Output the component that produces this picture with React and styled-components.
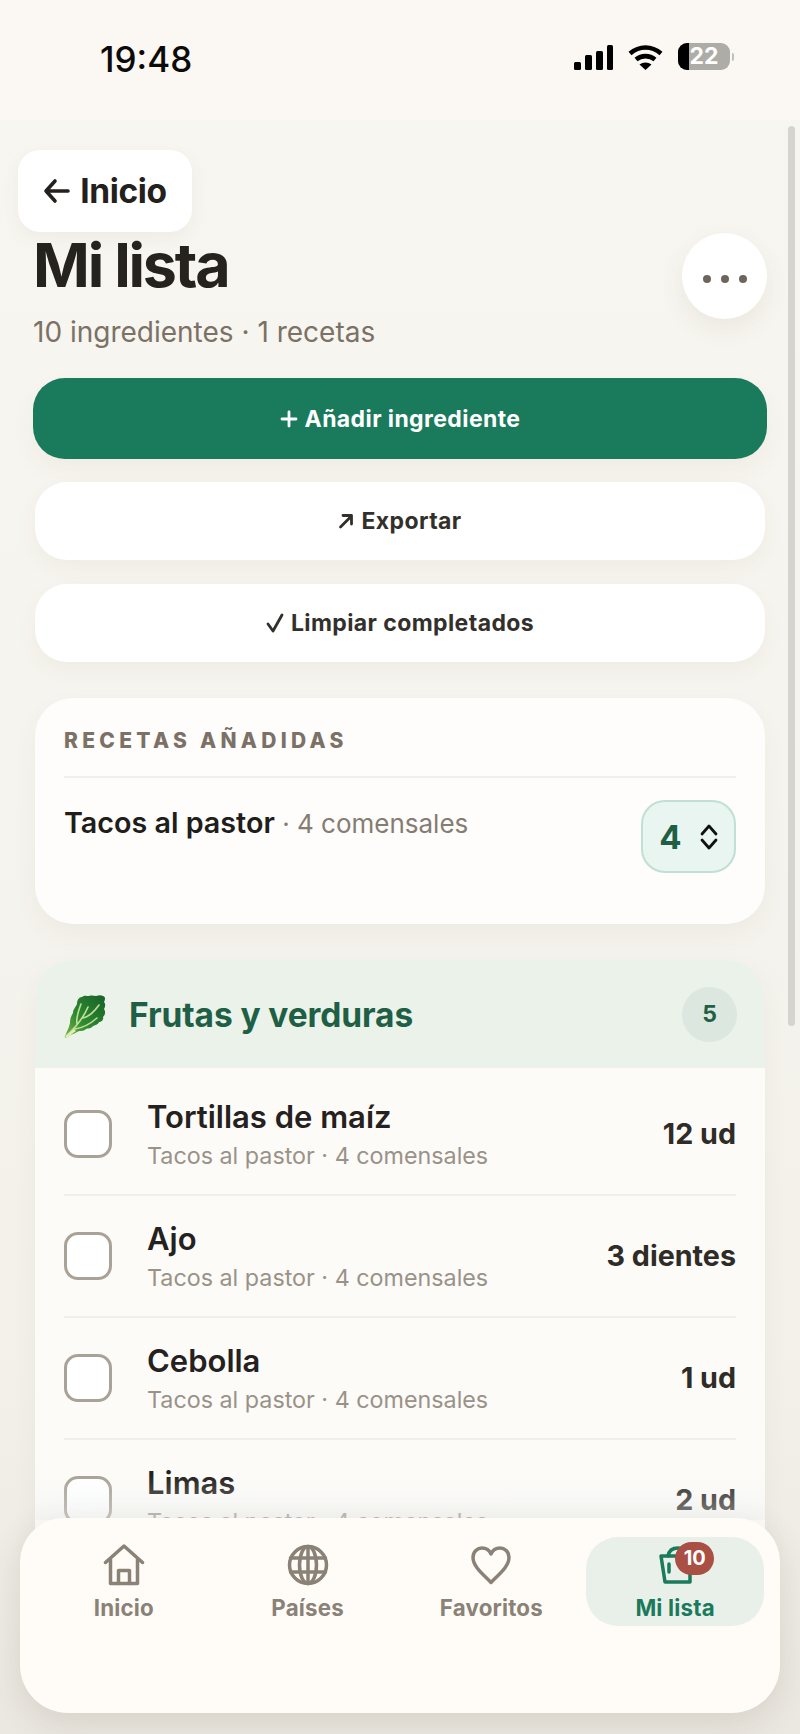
import React from "react";
import styled, { createGlobalStyle } from "styled-components";

const Global = createGlobalStyle`
  html, body { margin: 0; padding: 0; background: #f5f3ed; }
  * { box-sizing: border-box; }
  body { font-family: "Inter", "Liberation Sans", sans-serif; }
`;

const Page = styled.div`
  position: relative;
  width: 800px;
  height: 1734px;
  overflow: hidden;
  display: flex;
  flex-direction: column;
  background: linear-gradient(180deg, #f8f6f0 0%, #f6f4ee 45%, #f2f0e9 80%, #ebe8e1 100%);
`;

const StatusBar = styled.div`
  flex: 0 0 120px;
  background: #fbf8f3;
  display: flex;
  align-items: flex-start;
  justify-content: space-between;
  padding: 39px 70px 0 100px;
`;

const Time = styled.div`
  font-size: 35px;
  line-height: 40px;
  font-weight: 500;
  color: #0b0b0b;
`;

const StatusIcons = styled.div`
  display: flex;
  align-items: flex-start;
  gap: 15px;
  padding-top: 6px;
`;

const Battery = styled.div`
  position: relative;
  width: 52px;
  height: 27px;
  border-radius: 9px;
  overflow: hidden;
  background: #aeaca7;
  color: #fff;
  font-size: 23px;
  font-weight: 700;
  line-height: 27px;
  text-align: center;
  &::before {
    content: "";
    position: absolute;
    left: 0;
    top: 0;
    bottom: 0;
    width: 11px;
    background: #000;
  }
`;

const BatteryLabel = styled.span`
  position: relative;
`;

const BatteryWrap = styled.div`
  position: relative;
  margin-top: -2px;
  &::after {
    content: "";
    position: absolute;
    left: 54px;
    top: 10px;
    width: 2px;
    height: 8px;
    border-radius: 0 3px 3px 0;
    background: #c2c0bb;
  }
`;

const Scroller = styled.main`
  flex: 1;
  min-height: 0;
  padding: 112px 33px 0;
  overflow: hidden;
`;

const Scrollbar = styled.div`
  position: absolute;
  top: 126px;
  right: 5px;
  width: 7px;
  height: 900px;
  border-radius: 4px;
  background: #d6d4ce;
`;

const BackButton = styled.button`
  position: absolute;
  left: 18px;
  top: 150px;
  width: 174px;
  height: 82px;
  border: 0;
  border-radius: 22px;
  background: #fff;
  box-shadow: 0 6px 18px rgba(90, 80, 60, 0.06);
  display: flex;
  align-items: center;
  justify-content: center;
  gap: 9px;
  font-family: inherit;
  font-size: 33.5px;
  font-weight: 700;
  letter-spacing: -0.4px;
  color: #23201d;
`;

const Header = styled.header`
  display: flex;
  justify-content: space-between;
  align-items: flex-start;
`;

const Title = styled.h1`
  margin: 0;
  font-size: 61px;
  line-height: 66px;
  font-weight: 700;
  letter-spacing: -2.2px;
  color: #26231f;
`;

const Subtitle = styled.p`
  margin: 17px 0 0;
  font-size: 28px;
  line-height: 34px;
  color: #7b7166;
`;

const MoreButton = styled.button`
  width: 85px;
  height: 86px;
  margin-top: 1px;
  padding: 6px 0 0;
  border: 0;
  border-radius: 50%;
  background: #fff;
  box-shadow: 0 10px 24px rgba(90, 80, 60, 0.08);
  display: flex;
  align-items: center;
  justify-content: center;
  gap: 10px;
`;

const Dot = styled.span`
  width: 8px;
  height: 8px;
  border-radius: 50%;
  background: #6d645a;
`;

const Actions = styled.div`
  display: flex;
  flex-direction: column;
  align-items: stretch;
  margin-top: 29px;
`;

const PrimaryButton = styled.button`
  height: 81px;
  border: 0;
  border-radius: 32px;
  background: #1a7a5c;
  color: #fff;
  display: flex;
  align-items: center;
  justify-content: center;
  gap: 7px;
  font-family: inherit;
  font-size: 23px;
  font-weight: 700;
  letter-spacing: 0.4px;
  box-shadow: 0 10px 24px rgba(90, 80, 60, 0.05);
`;

const SecondaryButton = styled.button`
  height: 78px;
  margin: 23px 2px 0;
  border: 0;
  border-radius: 32px;
  background: #fff;
  color: #33302c;
  display: flex;
  align-items: center;
  justify-content: center;
  gap: 7px;
  font-family: inherit;
  font-size: 23px;
  font-weight: 700;
  letter-spacing: 0.4px;
  box-shadow: 0 8px 22px rgba(90, 80, 60, 0.05);
  & + & { margin-top: 24px; }
`;

const ButtonIcon = styled.svg`
  flex: none;
  fill: none;
  stroke: currentColor;
  stroke-width: 2.8;
  stroke-linecap: round;
  stroke-linejoin: round;
`;

const RecipesCard = styled.section`
  height: 226px;
  margin: 36px 2px 0;
  padding: 28px 29px 0;
  border-radius: 38px;
  background: #fefdfb;
  box-shadow: 0 10px 26px rgba(90, 80, 60, 0.05);
`;

const Eyebrow = styled.h2`
  margin: 0;
  font-size: 21px;
  line-height: 30px;
  font-weight: 800;
  letter-spacing: 4.3px;
  color: #7b7166;
  padding-bottom: 20px;
  border-bottom: 2px solid #f1efea;
`;

const RecipeRow = styled.div`
  display: flex;
  justify-content: space-between;
  align-items: flex-start;
  margin-top: 22px;
`;

const RecipeText = styled.div`
  font-size: 26px;
  line-height: 46px;
  color: #857c72;
`;

const RecipeName = styled.strong`
  font-size: 28.7px;
  font-weight: 600;
  color: #201d1a;
`;

const Stepper = styled.div`
  width: 95px;
  height: 73px;
  border: 2px solid #bfe0d3;
  border-radius: 24px;
  background: #e9f5f0;
  display: flex;
  align-items: center;
  justify-content: center;
  gap: 18px;
  font-size: 33px;
  font-weight: 700;
  color: #1f5f45;
`;

const CategoryCard = styled.section`
  margin: 36px 2px 0;
  border-radius: 38px 38px 0 0;
  overflow: hidden;
  background: #fcfbf8;
  box-shadow: 0 10px 26px rgba(90, 80, 60, 0.05);
`;

const CategoryHeader = styled.div`
  height: 108px;
  padding: 2px 28px 0 29px;
  display: flex;
  align-items: center;
  background: #eaf2ea;
`;

const LeafSlot = styled.span`
  display: flex;
  margin-top: 2px;
`;

const CategoryTitle = styled.h3`
  flex: 1;
  margin: 0 0 0 21px;
  font-size: 33.5px;
  font-weight: 700;
  letter-spacing: -0.1px;
  color: #1f5f45;
`;

const CountBadge = styled.span`
  width: 55px;
  height: 55px;
  margin-top: -2px;
  border-radius: 50%;
  background: #dce7df;
  display: flex;
  align-items: center;
  justify-content: center;
  font-size: 23px;
  font-weight: 700;
  color: #1f5f45;
`;

const ItemList = styled.div`
  padding: 6px 29px 0;
`;

const Item = styled.div`
  height: 122px;
  display: flex;
  align-items: center;
  border-bottom: 2px solid #f0eee9;
`;

const Checkbox = styled.span`
  flex: 0 0 48px;
  height: 48px;
  border: 3px solid #a9a297;
  border-radius: 14px;
  background: #fff;
`;

const ItemBody = styled.div`
  flex: 1;
  margin-left: 35px;
  display: flex;
  flex-direction: column;
  gap: 6px;
  padding-top: 2px;
`;

const ItemName = styled.div`
  font-size: 31px;
  line-height: 36px;
  font-weight: 600;
  color: #24211e;
`;

const ItemMeta = styled.div`
  font-size: 23.3px;
  line-height: 30px;
  color: #9a9288;
`;

const ItemQty = styled.div`
  margin-bottom: 2px;
  font-size: 28.7px;
  font-weight: 700;
  color: #2f2c28;
`;

const Fade = styled.div`
  position: absolute;
  left: 35px;
  right: 35px;
  top: 1475px;
  height: 45px;
  background: linear-gradient(180deg, rgba(238, 240, 240, 0), rgba(238, 240, 240, 0.45));
`;

const BottomNav = styled.nav`
  position: absolute;
  left: 20px;
  right: 20px;
  top: 1518px;
  height: 195px;
  padding: 19px 16px 0 15px;
  border-radius: 44px 44px 48px 48px;
  background: #fffcf7;
  box-shadow: 0 10px 34px rgba(80, 70, 50, 0.14);
  display: grid;
  grid-template-columns: repeat(4, 1fr);
  gap: 6px;
  align-items: start;
`;

const NavItem = styled.div`
  position: relative;
  height: 89px;
  border-radius: 32px;
  background: ${(p) => (p.$active ? "#e9f0ea" : "transparent")};
  color: ${(p) => (p.$active ? "#1a7a5c" : "#8a8177")};
  display: flex;
  flex-direction: column;
  align-items: center;
  padding-top: 7px;
`;

const NavIcon = styled.svg`
  width: 42px;
  height: 42px;
  fill: none;
  stroke: currentColor;
  stroke-width: 3.5;
  stroke-linecap: round;
  stroke-linejoin: round;
`;

const NavLabel = styled.span`
  margin-top: 8px;
  font-size: 22.3px;
  line-height: 28px;
  font-weight: 700;
  letter-spacing: 0.2px;
`;

const Badge = styled.span`
  position: absolute;
  left: 89px;
  top: 5px;
  width: 39px;
  height: 33px;
  border-radius: 17px;
  background: #a94f43;
  color: #fff;
  font-size: 20px;
  font-weight: 700;
  line-height: 33px;
  text-align: center;
`;

const Signal = () => (
  <svg width="39" height="25" viewBox="0 0 39 25" fill="#000">
    <rect x="0" y="17" width="7" height="8" rx="1.5" />
    <rect x="11" y="10" width="7" height="15" rx="1.5" />
    <rect x="22" y="6" width="7" height="19" rx="1.5" />
    <rect x="33" y="0" width="6" height="25" rx="1.5" />
  </svg>
);

const Wifi = () => (
  <svg width="35" height="25" viewBox="0 0 35 25" fill="none" stroke="#000" strokeWidth="4.6">
    <path d="M2 8.5C11.5 0.5 23.5 0.5 33 8.5" />
    <path d="M8 14.5C13.5 10 21.5 10 27 14.5" />
    <path d="M17.5 25L11.5 19.5C15 16.8 20 16.8 23.5 19.5Z" fill="#000" stroke="none" />
  </svg>
);

const Leaf = () => (
  <svg width="44" height="44" viewBox="0 0 44 44">
    <defs>
      <linearGradient id="leafFill" x1="0" y1="1" x2="1" y2="0">
        <stop offset="0" stopColor="#7fb548" />
        <stop offset="0.4" stopColor="#2f8a30" />
        <stop offset="1" stopColor="#17602a" />
      </linearGradient>
    </defs>
    <path
      d="M1 42C3 37 5 34 6 29C6 25 7 22 9 19C9 15 12 13 13 10C13 6 15 3 18 3C20 1 23 2 25 2C28 1 30 2 32 2C35 1 37 1 39 2C42 3 41 6 40 8C42 10 41 13 40 15C42 18 41 21 39 23C40 26 37 28 35 28C34 31 31 31 29 32C27 35 24 34 22 35C19 38 16 36 13 38C10 40 7 40 4 43C2 44 0 44 1 42Z"
      fill="url(#leafFill)"
    />
    <path
      d="M2 42C10 35 18 27 24 13M11 35C18 34 25 31 33 24M13 30C12 25 14 18 17 10M19 24C24 23 30 18 35 11"
      fill="none"
      stroke="#cfe8a2"
      strokeWidth="1.6"
      strokeLinecap="round"
      opacity="0.9"
    />
    <path d="M1 43C4 40 7 38 10 35L12 37C8 40 5 42 3 44Z" fill="#e3efb8" />
  </svg>
);

const Chevrons = () => (
  <svg width="18" height="26" viewBox="0 0 18 26" fill="none" stroke="#111" strokeWidth="2.8" strokeLinecap="round" strokeLinejoin="round">
    <path d="M2 10L9 2L16 10" />
    <path d="M2 16L9 24L16 16" />
  </svg>
);

const BackArrow = () => (
  <svg width="28" height="26" viewBox="0 0 28 26" fill="none" stroke="#23201d" strokeWidth="3.6" strokeLinecap="round" strokeLinejoin="round">
    <path d="M25 13H3M12 3L3 13L12 23" />
  </svg>
);

const items = [
  ["Tortillas de maíz", "12 ud"],
  ["Ajo", "3 dientes"],
  ["Cebolla", "1 ud"],
  ["Limas", "2 ud"],
];

export default function App() {
  return (
    <Page>
      <Global />
      <StatusBar>
        <Time>19:48</Time>
        <StatusIcons>
          <Signal />
          <Wifi />
          <BatteryWrap>
            <Battery>
              <BatteryLabel>22</BatteryLabel>
            </Battery>
          </BatteryWrap>
        </StatusIcons>
      </StatusBar>

      <Scroller>
        <Header>
          <div>
            <Title>Mi lista</Title>
            <Subtitle>10 ingredientes · 1 recetas</Subtitle>
          </div>
          <MoreButton aria-label="Más">
            <Dot />
            <Dot />
            <Dot />
          </MoreButton>
        </Header>

        <Actions>
          <PrimaryButton>
            <ButtonIcon width="18" height="18" viewBox="0 0 18 18">
              <path d="M9 2V16M2 9H16" />
            </ButtonIcon>
            Añadir ingrediente
          </PrimaryButton>
          <SecondaryButton>
            <ButtonIcon width="16" height="16" viewBox="0 0 16 16">
              <path d="M2.5 14L13.5 3M5 2.5H13.5V11" />
            </ButtonIcon>
            Exportar
          </SecondaryButton>
          <SecondaryButton>
            <ButtonIcon width="18" height="20" viewBox="0 0 18 20">
              <path d="M2 11L7 18L16 2" />
            </ButtonIcon>
            Limpiar completados
          </SecondaryButton>
        </Actions>

        <RecipesCard>
          <Eyebrow>RECETAS AÑADIDAS</Eyebrow>
          <RecipeRow>
            <RecipeText>
              <RecipeName>Tacos al pastor</RecipeName> · 4 comensales
            </RecipeText>
            <Stepper>
              4
              <Chevrons />
            </Stepper>
          </RecipeRow>
        </RecipesCard>

        <CategoryCard>
          <CategoryHeader>
            <LeafSlot>
              <Leaf />
            </LeafSlot>
            <CategoryTitle>Frutas y verduras</CategoryTitle>
            <CountBadge>5</CountBadge>
          </CategoryHeader>
          <ItemList>
            {items.map(([name, qty]) => (
              <Item key={name}>
                <Checkbox />
                <ItemBody>
                  <ItemName>{name}</ItemName>
                  <ItemMeta>Tacos al pastor · 4 comensales</ItemMeta>
                </ItemBody>
                <ItemQty>{qty}</ItemQty>
              </Item>
            ))}
          </ItemList>
        </CategoryCard>
      </Scroller>

      <Scrollbar />
      <BackButton>
        <BackArrow />
        Inicio
      </BackButton>
      <Fade />

      <BottomNav>
        <NavItem>
          <NavIcon viewBox="0 0 42 42">
            <path d="M2.5 18.5L21 2L39.5 18.5M7.5 15V39.5H34.5V15" />
            <path d="M15.5 39.5V26.5H26.5V39.5" />
          </NavIcon>
          <NavLabel>Inicio</NavLabel>
        </NavItem>
        <NavItem>
          <NavIcon viewBox="0 0 42 42">
            <circle cx="21" cy="21" r="18.5" />
            <ellipse cx="21" cy="21" rx="8.5" ry="18.5" />
            <path d="M3.5 14H38.5M3.5 28H38.5M21 2.5V39.5" />
          </NavIcon>
          <NavLabel>Países</NavLabel>
        </NavItem>
        <NavItem>
          <NavIcon viewBox="0 0 42 42">
            <path d="M21 38.5C14 31 3 23 3 13.5C3 7.5 7.5 4 12 4C16 4 19.5 6.5 21 10C22.5 6.5 26 4 30 4C34.5 4 39 7.5 39 13.5C39 23 28 31 21 38.5Z" />
          </NavIcon>
          <NavLabel>Favoritos</NavLabel>
        </NavItem>
        <NavItem $active>
          <NavIcon viewBox="0 0 42 42">
            <path d="M7 12H36V38H11Z" />
            <path d="M14 12C15 6 19 4 24 4C28 4 30 7 30 12" />
            <path d="M15 20V28" />
          </NavIcon>
          <NavLabel>Mi lista</NavLabel>
          <Badge>10</Badge>
        </NavItem>
      </BottomNav>
    </Page>
  );
}
